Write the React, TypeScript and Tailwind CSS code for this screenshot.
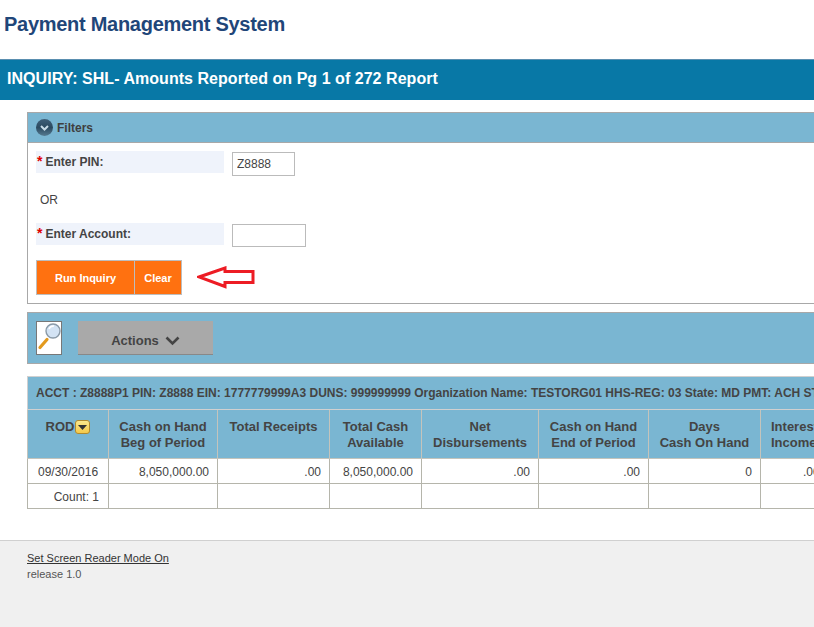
export default function App() {
  const th = "border border-[#c4c4bc] align-top pt-[9px] font-bold text-[13px] leading-[16px] text-[#444]";
  const td = "border border-[#b5b5ab] pt-[2px] text-[12px] text-[#444]";
  const num = `${td} text-right pr-[8px]`;
  return (
    <div className="w-[814px] h-[627px] overflow-hidden bg-white flex flex-col font-['Liberation_Sans',Arial,sans-serif]">
      <h1 className="h-[59px] shrink-0 pl-[4px] pt-[12px] text-[20px] leading-[24px] font-bold text-[#1f4679] tracking-[-0.28px]">Payment Management System</h1>
      <div className="h-[41px] shrink-0 bg-[#0878a6] border-t border-[#5a8fb0] pl-[7px] flex items-center text-[16px] font-bold text-white tracking-[0.04px] pb-[3px]">
        INQUIRY: SHL- Amounts Reported on Pg 1 of 272 Report
      </div>

      <section className="ml-[27px] mt-[12px] w-[860px] h-[192px] shrink-0 border border-[#a8a8a8] flex flex-col">
        <div className="h-[30px] shrink-0 bg-[#7ab6d2] border-b border-[#a8a8a8] flex items-center pl-[8px] gap-[4px]">
          <span className="w-[17px] h-[17px] rounded-full bg-[linear-gradient(#3f5f78,#2b4a60_50%,#557a90)] flex items-center justify-center">
            <svg width="11" height="11" viewBox="0 0 11 11" fill="none" stroke="#c7dbe6" strokeWidth="2"><path d="M2 4l3.5 3.5L9 4" /></svg>
          </span>
          <span className="text-[12px] font-bold text-[#3f3f3f]">Filters</span>
        </div>
        <div className="flex-1 pl-[8px] pt-[8px] flex flex-col">
          <div className="flex items-start h-[26px] shrink-0">
            <div className="w-[188px] h-[22px] bg-[#eff3fb] flex items-center pl-[1px] text-[12px] font-bold text-[#444]">
              <span className="text-[#e00000] text-[14px] leading-[14px] mr-[3px] -mt-[3px]">*</span>Enter PIN:
            </div>
            <input readOnly value="Z8888" className="ml-[8px] mt-[1px] w-[63px] h-[24px] border border-[#bbb] pl-[4px] text-[12px] text-[#444] outline-none" />
          </div>
          <div className="h-[46px] shrink-0 pl-[4px] pt-[15px] text-[12px] leading-[16px] text-[#444]">OR</div>
          <div className="flex items-start h-[37px] shrink-0">
            <div className="w-[188px] h-[22px] bg-[#eff3fb] flex items-center pl-[1px] text-[12px] font-bold text-[#444]">
              <span className="text-[#e00000] text-[14px] leading-[14px] mr-[3px] -mt-[3px]">*</span>Enter Account:
            </div>
            <input readOnly className="ml-[8px] mt-[1px] w-[74px] h-[23px] border border-[#bbb] outline-none" />
          </div>
          <div className="flex items-center">
            <button className="w-[99px] h-[35px] pt-[1px] bg-[#ff7110] border border-[#bdbdbd] text-white text-[11px] font-bold">Run Inquiry</button>
            <button className="w-[47px] h-[35px] pt-[1px] bg-[#ff7110] border border-[#bdbdbd] border-l-0 text-white text-[11px] font-bold">Clear</button>
            <svg className="ml-[15px]" width="59" height="24" viewBox="0 0 59 24" fill="none" stroke="#ed1c24" strokeWidth="3">
              <path d="M2 11 L28 2 L28 5.5 L56 5.5 L56 16.5 L28 16.5 L28 20.5 Z" />
            </svg>
          </div>
        </div>
      </section>

      <section className="ml-[27px] mt-[8px] w-[860px] h-[52px] shrink-0 bg-[#7ab6d2] border border-[#a8a8a8] flex items-center pl-[8px]">
        <div className="w-[26px] h-[34px] bg-white border border-[#777] flex">
          <svg width="24" height="32" viewBox="0 0 24 32">
            <path d="M3 25.5 L10 17.5" stroke="#e39a1e" strokeWidth="3.2" strokeLinecap="round" />
            <circle cx="16" cy="9" r="7" fill="#d3e3f4" stroke="#8a9aa8" strokeWidth="1.4" />
            <path d="M12 7a5 5 0 0 1 5-3" stroke="#fff" strokeWidth="1.5" fill="none" />
          </svg>
        </div>
        <button className="ml-[16px] w-[135px] h-[34px] pt-[6px] bg-[#a9a9a9] border-b border-[#888] flex items-center justify-center gap-[6px] text-[13px] font-bold text-[#444]">
          Actions
          <svg width="15" height="10" viewBox="0 0 15 10" fill="none" stroke="#444" strokeWidth="2.6"><path d="M1.5 1.5l6 6 6-6" /></svg>
        </button>
      </section>

      <table className="ml-[27px] mt-[12px] w-[900px] shrink-0 table-fixed border-collapse">
        <colgroup>
          <col className="w-[81px]" />
          <col className="w-[109px]" />
          <col className="w-[112px]" />
          <col className="w-[92px]" />
          <col className="w-[117px]" />
          <col className="w-[110px]" />
          <col className="w-[112px]" />
          <col className="w-[167px]" />
        </colgroup>
        <thead>
          <tr className="h-[33px] bg-[#7ab6d2]">
            <td colSpan={8} className="border border-[#d0d0d0] pl-[8px] text-[12px] font-bold text-[#444] whitespace-nowrap">
              ACCT : Z8888P1 PIN: Z8888 EIN: 1777779999A3 DUNS: 999999999 Organization Name: TESTORG01 HHS-REG: 03 State: MD PMT: ACH STATUS: ACTIVE
            </td>
          </tr>
          <tr className="h-[49px] bg-[#7ab6d2]">
            <th className={`${th} text-center`}>
              <span className="inline-flex items-center gap-[1px]">ROD
                <span className="w-[15px] h-[14px] rounded-[3px] bg-[linear-gradient(#fbe88c,#f5c94a)] border border-[#b08a30] inline-flex items-center justify-center">
                  <svg width="9" height="5" viewBox="0 0 9 5"><path d="M0 0h9L4.5 5z" fill="#333" /></svg>
                </span>
              </span>
            </th>
            <th className={`${th} text-center`}>Cash on Hand<br />Beg of Period</th>
            <th className={`${th} text-center`}>Total Receipts</th>
            <th className={`${th} text-center`}>Total Cash<br />Available</th>
            <th className={`${th} text-center`}>Net<br />Disbursements</th>
            <th className={`${th} text-center`}>Cash on Hand<br />End of Period</th>
            <th className={`${th} text-center`}>Days<br />Cash On Hand</th>
            <th className={`${th} text-left pl-[10px]`}>Interest<br />Income</th>
          </tr>
        </thead>
        <tbody>
          <tr className="h-[25px]">
            <td className={`${td} text-left pl-[10px]`}>09/30/2016</td>
            <td className={num}>8,050,000.00</td>
            <td className={num}>.00</td>
            <td className={num}>8,050,000.00</td>
            <td className={num}>.00</td>
            <td className={num}>.00</td>
            <td className={num}>0</td>
            <td className={`${td} text-left pl-[42px]`}>.00</td>
          </tr>
          <tr className="h-[25px]">
            <td className={`${td} text-right pr-[9px]`}>Count: 1</td>
            <td className={num}></td>
            <td className={num}></td>
            <td className={num}></td>
            <td className={num}></td>
            <td className={num}></td>
            <td className={num}></td>
            <td className={num}></td>
          </tr>
        </tbody>
      </table>

      <footer className="mt-[31px] flex-1 bg-[#f0f0f0] border-t border-[#d0d0d0] pl-[27px] pt-[9px] text-[11px] leading-[16px] text-[#555]">
        <a className="underline text-[#333] block">Set Screen Reader Mode On</a>
        <div>release 1.0</div>
      </footer>
    </div>
  );
}
